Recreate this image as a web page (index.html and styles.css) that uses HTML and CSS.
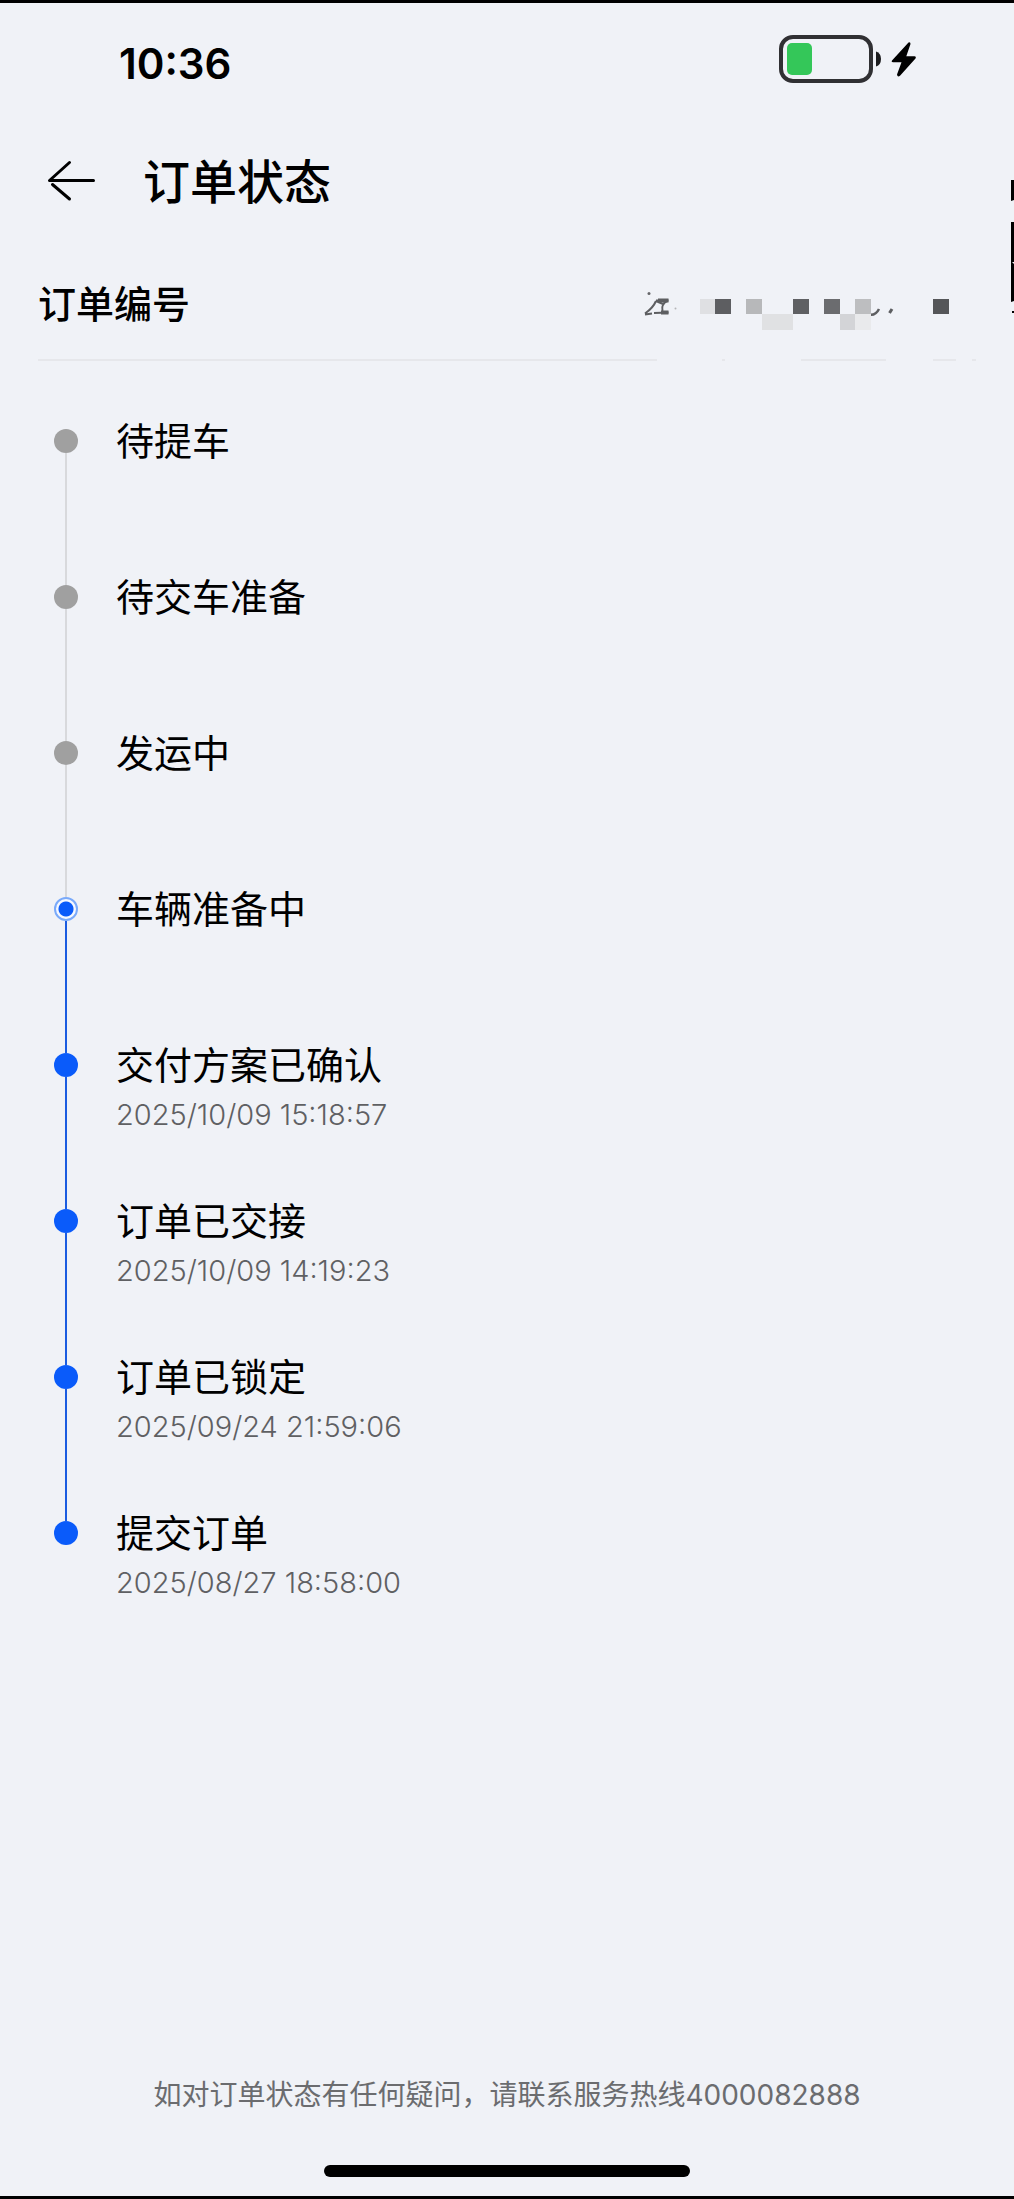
FILE: index.html
```html
<!DOCTYPE html>
<html lang="zh-CN">
<head>
<meta charset="utf-8">
<meta name="viewport" content="width=device-width, initial-scale=1">
<title>订单状态</title>
<link rel="stylesheet" href="styles.css">
</head>
<body>
<div class="screen">
  <div class="status-bar">
    <time class="clock">10:36</time>
    <svg class="battery" viewBox="0 0 140 58" width="140" height="58" role="img" aria-label="正在充电">
      <rect x="3" y="2" width="90" height="44" rx="12" fill="none" stroke="#303033" stroke-width="4"/>
      <rect x="9" y="8" width="25" height="32" rx="5" fill="#34c759"/>
      <path d="M98 16.500Q103 18 103 24T98 31.500Z" fill="#1c1c1e"/>
      <path d="M130.500 7.500 L114 25.500 Q113 27.200 115 27.200 L123.500 27.200 L119 39.500 Q119.500 42.500 122 40.800 L137.500 23.500 Q138.500 21.500 136.500 21.300 L128.300 21.300 L132.500 9 Q132.500 6.500 130.500 7.500Z" fill="#000"/>
    </svg>
  </div>

  <header class="nav">
    <button class="back" type="button" aria-label="返回">
      <svg viewBox="0 0 50 42" width="50" height="42" fill="none" stroke="#000" stroke-width="3" stroke-linecap="round" stroke-linejoin="round">
        <path d="M23.500 2.500 3.500 20.500H47.500M6.500 24.500 23.500 39"/>
      </svg>
    </button>
    <h1 class="title">订单状态</h1>
  </header>

  <main class="content">
    <section class="order">
      <h2 class="order-label">订单编号</h2>
      <svg class="order-mask" viewBox="0 0 330 60" width="330" height="60" role="img" aria-label="订单编号已隐藏">
        <g fill="none" stroke="#5d5e61" stroke-width="2">
          <path d="M12 26.500H24.500M12 27 Q9 34 1 39.500M1 40.500 8 39.500M12 27 19 30M23 27 Q17 30 18.500 37M10 39 24.500 38.500"/>
          <path d="M14 26.500H24.500M17 38.500H24.500" stroke-width="4"/>
          <path d="M223 40Q231 43 235 35" stroke-width="2.500"/>
          <path d="M248 35 245.500 39" stroke-width="3"/>
        </g>
        <circle cx="5" cy="19.500" r="1.500" fill="#66676a"/>
        <circle cx="31.500" cy="34.500" r="1" fill="#b5b6b8"/>
        <rect x="56" y="25" width="15" height="15" fill="#dfe0e3"/>
        <rect x="71" y="25" width="16" height="15" fill="#5d5e61"/>
        <rect x="102" y="25" width="16" height="15" fill="#b7b8ba"/>
        <rect x="118" y="40" width="31" height="16" fill="#e0e1e3"/>
        <rect x="149" y="25" width="16" height="15" fill="#5f6063"/>
        <rect x="180" y="25" width="16" height="15" fill="#6b6c6f"/>
        <rect x="196" y="40" width="15" height="16" fill="#d3d4d7"/>
        <rect x="211" y="25" width="16" height="15" fill="#bdbec0"/>
        <rect x="211" y="40" width="16" height="16" fill="#e9eaec"/>
        <rect x="289" y="25" width="16" height="15" fill="#555659"/>
      </svg>
    </section>
    <hr class="divider">

    <ol class="timeline">
      <li class="step"><span class="marker"></span><div class="info"><h3>待提车</h3></div></li>
      <li class="step"><span class="marker"></span><div class="info"><h3>待交车准备</h3></div></li>
      <li class="step"><span class="marker"></span><div class="info"><h3>发运中</h3></div></li>
      <li class="step current" aria-current="step"><span class="marker"></span><div class="info"><h3>车辆准备中</h3></div></li>
      <li class="step done"><span class="marker"></span><div class="info"><h3>交付方案已确认</h3><time>2025/10/09 15:18:57</time></div></li>
      <li class="step done"><span class="marker"></span><div class="info"><h3>订单已交接</h3><time>2025/10/09 14:19:23</time></div></li>
      <li class="step done"><span class="marker"></span><div class="info"><h3>订单已锁定</h3><time>2025/09/24 21:59:06</time></div></li>
      <li class="step done"><span class="marker"></span><div class="info"><h3>提交订单</h3><time>2025/08/27 18:58:00</time></div></li>
    </ol>
  </main>

  <footer class="footer">
    <p class="hotline">如对订单状态有任何疑问，请联系服务热线4000082888</p>
    <div class="home-bar"></div>
  </footer>

  <svg class="edge" viewBox="0 0 3 134" width="3" height="134" aria-hidden="true">
    <path d="M0 0H3V20L0 21ZM0 42H3V121L0 122ZM1 131H3V133H1Z" fill="#000"/>
    <path d="M1 82H3V84Z" fill="#f0f2f7"/>
  </svg>
</div>
</body>
</html>
```

FILE: styles.css
```css
*,
*::before,
*::after {
  box-sizing: border-box;
}

body,
h1,
h2,
h3,
p,
ol {
  margin: 0;
  padding: 0;
}

body {
  background: #f0f2f7;
  color: #000;
  font-family: Inter, "Noto Sans CJK SC", sans-serif;
}

.screen {
  position: relative;
  display: flex;
  flex-direction: column;
  min-height: 100vh;
  border-top: 3px solid #000;
  border-bottom: 3px solid #000;
}

.status-bar {
  display: flex;
  align-items: center;
  justify-content: space-between;
  height: 122px;
  padding: 0 96px 0 119px;
}

.clock {
  padding-bottom: 2px;
  font-size: 42px;
  font-weight: 600;
}

.nav {
  display: flex;
  align-items: center;
  gap: 47px;
  height: 112px;
  padding: 0 46px;
}

.back {
  display: flex;
  padding: 0;
  border: 0;
  background: none;
}

.title {
  padding-bottom: 6px;
  font-size: 47px;
  font-weight: 500;
}

.content {
  flex: 1;
  padding: 0 38px;
}

.order {
  display: flex;
  align-items: center;
  justify-content: space-between;
  height: 122px;
  padding: 12px 2px 0 0;
}

.order-label {
  padding-bottom: 6px;
  font-size: 38px;
  font-weight: 500;
}

.divider {
  height: 2px;
  margin: 0;
  border: 0;
  background: linear-gradient(to left,
    #e6e7eb 4px, transparent 4px 20px,
    #e6e7eb 20px 43px, transparent 43px 90px,
    #e6e7eb 90px 175px, transparent 175px 251px,
    #e6e7eb 251px 254px, transparent 254px 319px,
    #e6e7eb 319px);
}

.timeline {
  margin-top: 68px;
  padding-left: 16px;
  list-style: none;
}

.step {
  display: flex;
  gap: 38px;
  min-height: 156px;
  --dot: #a0a0a0;
  --line: #d8d9dc;
}

.done,
.current {
  --dot: #0a5bfa;
  --line: #1b5ce0;
}

.marker {
  display: flex;
  flex-direction: column;
  align-items: center;
  width: 24px;
}

.marker::before {
  content: "";
  width: 24px;
  height: 24px;
  border-radius: 50%;
  background: var(--dot);
}

.current .marker::before {
  border: 2px solid #7aaafa;
  background: radial-gradient(circle, #0a5bfa 7px, #f5f8ff 8px);
}

.marker::after {
  content: "";
  flex: 1;
  width: 2px;
  background: var(--line);
}

.step:last-child .marker::after {
  display: none;
}

.info {
  margin-top: -14px;
}

.info h3 {
  font-size: 38px;
  font-weight: 400;
  line-height: 52px;
}

.info time {
  display: block;
  color: #5f6063;
  font-size: 29px;
  font-weight: 300;
  line-height: 48px;
}

.footer {
  display: flex;
  flex-direction: column;
  align-items: center;
  gap: 50px;
  padding-bottom: 19px;
}

.hotline {
  color: #6b6c6f;
  font-size: 28px;
  font-weight: 400;
  line-height: 40px;
}

.home-bar {
  width: 36%;
  height: 12px;
  border-radius: 6px;
  background: #000;
}

.edge {
  position: absolute;
  top: 177px;
  right: 0;
}
```
